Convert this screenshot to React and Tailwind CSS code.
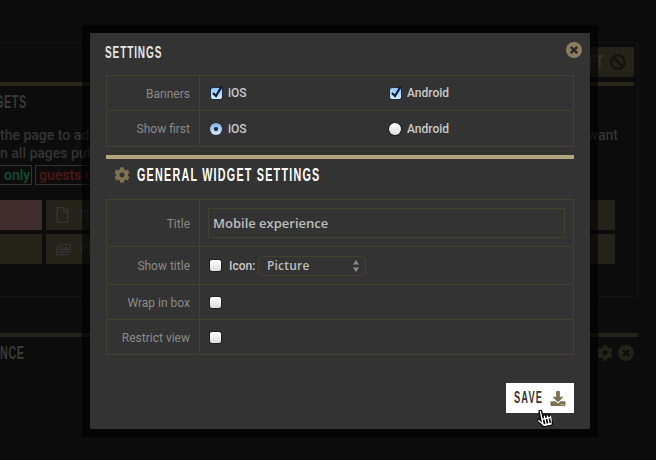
import { FaBan, FaCog, FaDownload, FaRegFile, FaRegImages, FaHandPointer } from 'react-icons/fa';

const headingFont = { fontFamily: '"Liberation Sans", Arial, sans-serif' };

const checkCls =
  'block h-[11px] w-[11px] appearance-none rounded-[2px] bg-gradient-to-b from-[#ffffff] to-[#dcdcdc] shadow-[0_0_0_1px_rgba(0,0,0,0.35)]';

function Check({ checked }) {
  if (!checked) return <input type="checkbox" readOnly className={checkCls} />;
  return (
    <span className="relative block h-[11px] w-[11px]">
      <input
        type="checkbox"
        readOnly
        checked
        className="block h-[11px] w-[11px] appearance-none rounded-[2px] bg-gradient-to-b from-[#8fc3f5] to-[#d4e9fb] shadow-[0_0_0_1px_rgba(20,40,80,0.5)]"
      />
      <svg viewBox="0 0 12 14" className="absolute left-0 top-[-3px] h-[14px] w-[12px]">
        <path d="M2 8 L5 11 L11 1" fill="none" stroke="#0b1c3d" strokeWidth="2.2" />
      </svg>
    </span>
  );
}

function Radio({ checked }) {
  if (checked) {
    return (
      <span className="ml-[-1px] flex h-[12px] w-[12px] items-center justify-center rounded-full bg-gradient-to-b from-[#7db4ee] to-[#d6e9fb]">
        <span className="h-[4px] w-[4px] rounded-full bg-[#10203a]" />
      </span>
    );
  }
  return <span className="ml-[-1px] block h-[12px] w-[12px] rounded-full bg-gradient-to-b from-[#ffffff] to-[#dddddd] shadow-[0_0_0_1px_rgba(0,0,0,0.5)]" />;
}

function Option({ control, label, width }) {
  return (
    <div className={`flex items-center ${width}`}>
      <span className="ml-[1px] flex w-[17px] shrink-0">{control}</span>
      <span className="text-[12px] font-medium text-[#c9c9c9]">{label}</span>
    </div>
  );
}

function Row({ label, height, last, nudge, children }) {
  return (
    <div className={`flex ${height} ${last ? '' : 'border-b border-[#46412f]'}`}>
      <div className={`flex w-[93px] shrink-0 items-center justify-end border-r border-[#46412f] pr-[9px] text-[12px] text-[#8a8a8a] ${nudge ? 'pt-[2px]' : ''}`}>
        {label}
      </div>
      <div className="flex flex-1 items-center pl-[10px]">{children}</div>
    </div>
  );
}

function BackgroundPage() {
  return (
    <div className="flex h-full flex-col pt-[42px] text-[#343434]">
      <div className="mr-[18px] flex h-[255px] flex-col border-t border-r border-b border-[#131313] pt-[4px]">
        <div className="flex h-[30px] justify-end pr-[3px]">
          <div className="flex w-[60px] items-center justify-end gap-[7px] bg-[#25221a] pr-[8px]">
            <span className="origin-right scale-x-[0.6] text-[19px] font-bold" style={headingFont}>PT</span>
            <FaBan className="h-[16px] w-[16px] shrink-0 text-[#12110e]" />
          </div>
        </div>
        <div className="mt-[5px] mr-[3px] h-[4px] bg-[#2a261b]" />
        <div className="mt-[6px] ml-[-5px] origin-left scale-x-[0.6] text-[18px] font-bold leading-[20px] tracking-[1px] text-[#3a3a3a]" style={headingFont}>
          GETS
        </div>
        <div className="mt-[14px] flex justify-between pr-[19px] text-[14px] font-medium leading-[18px]">
          <span>the page to add</span>
          <span>want</span>
        </div>
        <div className="text-[14px] font-medium leading-[18px]">n all pages put</div>
        <div className="mt-[3px] flex h-[20px] gap-[3px] text-[14px] font-medium leading-[18px]">
          <span className="w-[32px] border border-l-0 border-[#333] pl-[4px] text-[#0c4f33]">only</span>
          <span className="w-[80px] border border-[#333] pl-[3px] whitespace-nowrap text-[#521710]">guests only</span>
        </div>
        <div className="mt-[15px] grid grid-cols-[42px_60px_1fr_25px] gap-x-[4px] gap-y-[4px] pr-[22px]">
          <div className="h-[30px] bg-[#402e2e]" />
          <div className="flex h-[30px] items-center gap-[9px] bg-[#25221a] pl-[10px] text-[13px]">
            <FaRegFile className="h-[16px] w-[13px]" />
            Th
          </div>
          <div />
          <div className="bg-[#25221a]" />
          <div className="h-[30px] bg-[#25221a]" />
          <div className="flex h-[30px] items-center gap-[9px] bg-[#25221a] pl-[10px] text-[13px]">
            <FaRegImages className="h-[15px] w-[15px]" />
            Ph
          </div>
          <div />
          <div className="bg-[#25221a]" />
        </div>
      </div>
      <div className="mt-[36px] mr-[18px] h-[4px] bg-[#25221a]" />
      <div className="mt-[6px] flex items-center justify-between pr-[22px]">
        <span className="origin-left scale-x-[0.6] text-[18px] font-bold leading-[20px] tracking-[1px] text-[#3a3a3a]" style={headingFont}>NCE</span>
        <span className="flex items-center gap-[5px] text-[#25221a]">
          <FaCog className="h-[16px] w-[16px]" />
          <svg viewBox="0 0 16 16" className="h-[16px] w-[16px]">
            <circle cx="8" cy="8" r="8" fill="#25221a" />
            <path d="M5 5 L11 11 M11 5 L5 11" stroke="#0c0c0c" strokeWidth="2.4" />
          </svg>
        </span>
      </div>
    </div>
  );
}

export default function App() {
  return (
    <div className="relative h-[460px] w-[656px] overflow-hidden bg-[#0c0c0c] font-['Roboto',sans-serif]">
      <BackgroundPage />

      <div className="absolute left-[90px] top-[33px] flex h-[396px] w-[500px] flex-col bg-[#333333] px-[16px] shadow-[0_0_0_8px_rgba(0,0,0,0.6)]">
        <div className="flex h-[42px] items-start justify-between pt-[11px]">
          <h2 className="ml-[-1px] origin-left scale-x-[0.59] whitespace-nowrap text-[17px] font-bold leading-[18px] tracking-[1.5px] text-[#e6e6e6]" style={headingFont}>
            SETTINGS
          </h2>
          <svg viewBox="0 0 16 16" className="mr-[-8px] mt-[-2px] h-[16px] w-[16px]">
            <circle cx="8" cy="8" r="8" fill="#8c7d5e" />
            <path d="M4.8 4.8 L11.2 11.2 M11.2 4.8 L4.8 11.2" stroke="#2b2b2b" strokeWidth="2.6" />
          </svg>
        </div>

        <div className="border border-[#46412f]">
          <Row label="Banners" height="h-[35px]" nudge>
            <Option control={<Check checked />} label="iOS" width="w-[179px]" />
            <Option control={<Check checked />} label="Android" />
          </Row>
          <Row label="Show first" height="h-[35px]" last>
            <Option control={<Radio checked />} label="iOS" width="w-[179px]" />
            <Option control={<Radio />} label="Android" />
          </Row>
        </div>

        <div className="mt-[8px] h-[4px] bg-[#b5a57f]" />

        <div className="flex h-[40px] items-center pb-[8px] pl-[8px]">
          <FaCog className="h-[16px] w-[16px] shrink-0 text-[#7f7152]" />
          <h3 className="ml-[7px] origin-left scale-x-[0.6] whitespace-nowrap text-[18px] font-bold tracking-[2px] text-white" style={headingFont}>
            GENERAL WIDGET SETTINGS
          </h3>
        </div>

        <div className="border border-[#46412f]">
          <Row label="Title" height="h-[47px]" nudge>
            <input
              readOnly
              value="Mobile experience"
              className="ml-[-2px] h-[30px] w-[357px] border border-[#46412f] bg-transparent px-[4px] font-['Open_Sans',sans-serif] text-[13px] font-semibold text-[#bdbdbd] outline-none"
            />
          </Row>
          <Row label="Show title" height="h-[38px]">
            <Check />
            <span className="w-[37px] shrink-0 pl-[8px] text-[12px] font-medium text-[#c9c9c9]">Icon:</span>
            <div className="relative">
              <select className="block h-[20px] w-[108px] appearance-none rounded-[5px] border border-[#46412f] bg-transparent pl-[8px] font-['Open_Sans',sans-serif] text-[12px] font-semibold tracking-[0.2px] text-[#bdbdbd] outline-none">
                <option>Picture</option>
              </select>
              <svg viewBox="0 0 6 12" className="absolute right-[7px] top-[4px] h-[12px] w-[6px]">
                <path d="M3 0 L6 4.5 L0 4.5 Z M3 12 L0 7.5 L6 7.5 Z" fill="#8a8a8a" />
              </svg>
            </div>
          </Row>
          <Row label="Wrap in box" height="h-[35px]" nudge>
            <Check />
          </Row>
          <Row label="Restrict view" height="h-[34px]" last nudge>
            <Check />
          </Row>
        </div>

        <div className="mt-[28px] flex justify-end">
          <button className="relative flex h-[30px] w-[68px] items-center justify-between bg-white pl-[8px] pr-[8px]">
            <span className="w-[30px] origin-left scale-x-[0.58] whitespace-nowrap text-left text-[16px] font-bold leading-none tracking-[2px] text-[#333333]" style={headingFont}>SAVE</span>
            <FaDownload className="h-[15px] w-[16px] shrink-0 text-[#7f7152]" />
            <FaHandPointer
              className="absolute left-[31px] top-[26px] h-[18px] w-[15px] -rotate-12 text-white"
              style={{ stroke: '#000', strokeWidth: 40 }}
            />
          </button>
        </div>
      </div>
    </div>
  );
}
